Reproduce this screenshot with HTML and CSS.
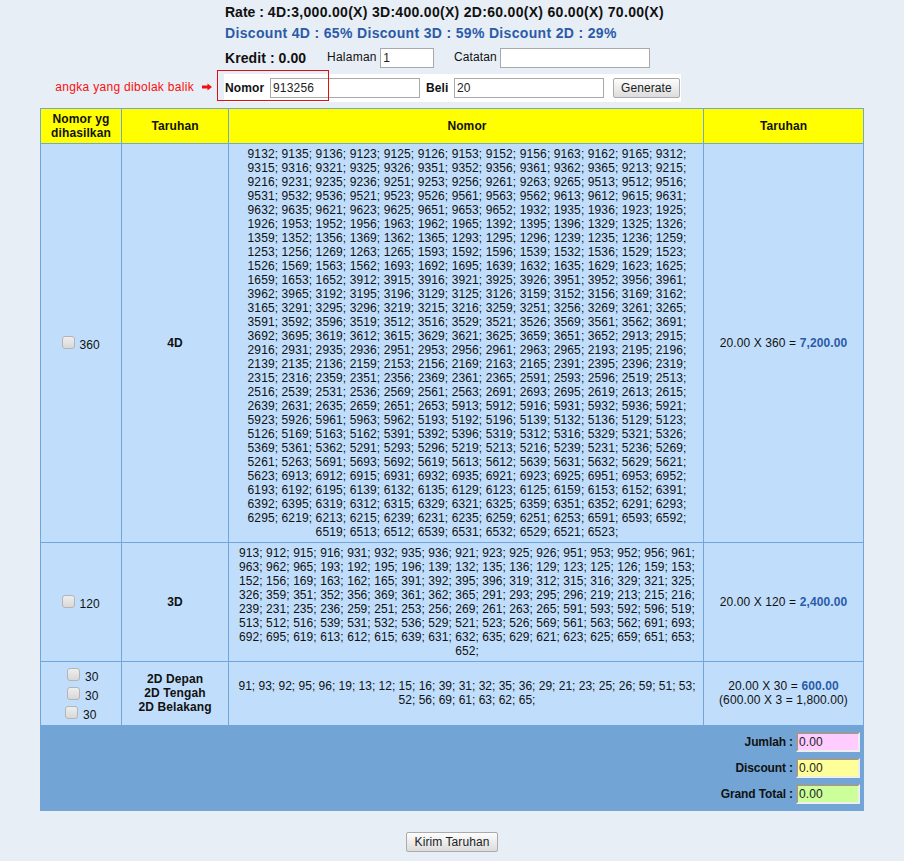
FILE: index.html
```html
<!DOCTYPE html>
<html lang="en">
<head>
    <meta charset="UTF-8">
    <meta name="viewport" content="width=device-width, initial-scale=1.0">
    <title>Generate Nomor</title>
    <link rel="stylesheet" href="styles.css">
</head>
<body>

    <!-- Rate and discount info -->
    <div class="info">
        <div class="rate"><span class="rate-label">Rate : </span>4D:3,000.00(X) 3D:400.00(X) 2D:60.00(X) 60.00(X) 70.00(X)</div>
        <div class="discount">Discount 4D : 65% Discount 3D : 59% Discount 2D : 29%</div>
        <div class="kredit-row">
            <span class="kredit">Kredit : 0.00</span>
            <label class="halaman">Halaman <input type="text" class="field field-small" value="1"></label>
            <label class="catatan">Catatan <input type="text" class="field"></label>
        </div>
    </div>

    <!-- Number entry -->
    <div class="entry-row">
        <div class="note">
            <span>angka yang dibolak balik</span>
            <svg class="note-arrow" width="10" height="8" viewBox="0 0 10 8"><path d="M0 2.5H5.5V0.5L10 4L5.5 7.5V5.5H0Z" fill="#f01010"/></svg>
        </div>
        <form class="entry">
            <label class="entry-label">Nomor</label>
            <input type="text" class="field" value="913256">
            <label class="entry-label beli">Beli</label>
            <input type="text" class="field" value="20">
            <button type="button" class="btn generate">Generate</button>
            <div class="highlight"></div>
        </form>
    </div>

    <!-- Result table -->
    <table class="result">
        <colgroup>
            <col class="col-count">
            <col class="col-type">
            <col class="col-numbers">
            <col class="col-bet">
        </colgroup>
        <tr>
            <th>Nomor yg dihasilkan</th>
            <th>Taruhan</th>
            <th class="list">Nomor</th>
            <th>Taruhan</th>
        </tr>
        <tr>
            <td><input type="checkbox" class="chk"> 360</td>
            <td class="type">4D</td>
            <td class="list">9132; 9135; 9136; 9123; 9125; 9126; 9153; 9152; 9156; 9163; 9162; 9165; 9312; 9315; 9316; 9321; 9325; 9326; 9351; 9352; 9356; 9361; 9362; 9365; 9213; 9215; 9216; 9231; 9235; 9236; 9251; 9253; 9256; 9261; 9263; 9265; 9513; 9512; 9516; 9531; 9532; 9536; 9521; 9523; 9526; 9561; 9563; 9562; 9613; 9612; 9615; 9631; 9632; 9635; 9621; 9623; 9625; 9651; 9653; 9652; 1932; 1935; 1936; 1923; 1925; 1926; 1953; 1952; 1956; 1963; 1962; 1965; 1392; 1395; 1396; 1329; 1325; 1326; 1359; 1352; 1356; 1369; 1362; 1365; 1293; 1295; 1296; 1239; 1235; 1236; 1259; 1253; 1256; 1269; 1263; 1265; 1593; 1592; 1596; 1539; 1532; 1536; 1529; 1523; 1526; 1569; 1563; 1562; 1693; 1692; 1695; 1639; 1632; 1635; 1629; 1623; 1625; 1659; 1653; 1652; 3912; 3915; 3916; 3921; 3925; 3926; 3951; 3952; 3956; 3961; 3962; 3965; 3192; 3195; 3196; 3129; 3125; 3126; 3159; 3152; 3156; 3169; 3162; 3165; 3291; 3295; 3296; 3219; 3215; 3216; 3259; 3251; 3256; 3269; 3261; 3265; 3591; 3592; 3596; 3519; 3512; 3516; 3529; 3521; 3526; 3569; 3561; 3562; 3691; 3692; 3695; 3619; 3612; 3615; 3629; 3621; 3625; 3659; 3651; 3652; 2913; 2915; 2916; 2931; 2935; 2936; 2951; 2953; 2956; 2961; 2963; 2965; 2193; 2195; 2196; 2139; 2135; 2136; 2159; 2153; 2156; 2169; 2163; 2165; 2391; 2395; 2396; 2319; 2315; 2316; 2359; 2351; 2356; 2369; 2361; 2365; 2591; 2593; 2596; 2519; 2513; 2516; 2539; 2531; 2536; 2569; 2561; 2563; 2691; 2693; 2695; 2619; 2613; 2615; 2639; 2631; 2635; 2659; 2651; 2653; 5913; 5912; 5916; 5931; 5932; 5936; 5921; 5923; 5926; 5961; 5963; 5962; 5193; 5192; 5196; 5139; 5132; 5136; 5129; 5123; 5126; 5169; 5163; 5162; 5391; 5392; 5396; 5319; 5312; 5316; 5329; 5321; 5326; 5369; 5361; 5362; 5291; 5293; 5296; 5219; 5213; 5216; 5239; 5231; 5236; 5269; 5261; 5263; 5691; 5693; 5692; 5619; 5613; 5612; 5639; 5631; 5632; 5629; 5621; 5623; 6913; 6912; 6915; 6931; 6932; 6935; 6921; 6923; 6925; 6951; 6953; 6952; 6193; 6192; 6195; 6139; 6132; 6135; 6129; 6123; 6125; 6159; 6153; 6152; 6391; 6392; 6395; 6319; 6312; 6315; 6329; 6321; 6325; 6359; 6351; 6352; 6291; 6293; 6295; 6219; 6213; 6215; 6239; 6231; 6235; 6259; 6251; 6253; 6591; 6593; 6592; 6519; 6513; 6512; 6539; 6531; 6532; 6529; 6521; 6523;</td>
            <td>20.00 X 360 = <span class="amount">7,200.00</span></td>
        </tr>
        <tr>
            <td><input type="checkbox" class="chk"> 120</td>
            <td class="type">3D</td>
            <td class="list list-3d">913; 912; 915; 916; 931; 932; 935; 936; 921; 923; 925; 926; 951; 953; 952; 956; 961; 963; 962; 965; 193; 192; 195; 196; 139; 132; 135; 136; 129; 123; 125; 126; 159; 153; 152; 156; 169; 163; 162; 165; 391; 392; 395; 396; 319; 312; 315; 316; 329; 321; 325; 326; 359; 351; 352; 356; 369; 361; 362; 365; 291; 293; 295; 296; 219; 213; 215; 216; 239; 231; 235; 236; 259; 251; 253; 256; 269; 261; 263; 265; 591; 593; 592; 596; 519; 513; 512; 516; 539; 531; 532; 536; 529; 521; 523; 526; 569; 561; 563; 562; 691; 693; 692; 695; 619; 613; 612; 615; 639; 631; 632; 635; 629; 621; 623; 625; 659; 651; 653; 652;</td>
            <td>20.00 X 120 = <span class="amount">2,400.00</span></td>
        </tr>
        <tr class="row-2d">
            <td class="chk-cell">
                <div class="chk-row shifted"><input type="checkbox" class="chk"> 30</div>
                <div class="chk-row shifted"><input type="checkbox" class="chk"> 30</div>
                <div class="chk-row"><input type="checkbox" class="chk"> 30</div>
            </td>
            <td class="type">2D Depan<br>2D Tengah<br>2D Belakang</td>
            <td class="list list-2d">91; 93; 92; 95; 96; 19; 13; 12; 15; 16; 39; 31; 32; 35; 36; 29; 21; 23; 25; 26; 59; 51; 53; 52; 56; 69; 61; 63; 62; 65;</td>
            <td>20.00 X 30 = <span class="amount">600.00</span><br>(600.00 X 3 = 1,800.00)</td>
        </tr>
        <tr>
            <td colspan="4" class="totals">
                <div class="total-row"><label>Jumlah :</label><input type="text" class="total-input pink" value="0.00"></div>
                <div class="total-row"><label>Discount :</label><input type="text" class="total-input yellow" value="0.00"></div>
                <div class="total-row"><label>Grand Total :</label><input type="text" class="total-input green" value="0.00"></div>
            </td>
        </tr>
    </table>

    <div class="submit-row">
        <button type="button" class="btn kirim">Kirim Taruhan</button>
    </div>

</body>
</html>
```

FILE: styles.css
```css
/* General Styles */
body {
    font-family: "Liberation Sans", Arial, sans-serif;
    font-size: 12px;
    letter-spacing: 0.11px;
    background-color: #e8eef5;
    margin: 0;
    padding: 0;
    color: #111;
}

/* Info block */
.info {
    padding-left: 225px;
}

.rate {
    font-size: 14px;
    font-weight: bold;
    letter-spacing: 0.3px;
    line-height: 16px;
    padding-top: 4px;
}

.rate-label {
    letter-spacing: 0;
}

.discount {
    font-size: 14px;
    font-weight: bold;
    letter-spacing: 0.33px;
    line-height: 16px;
    padding-top: 5px;
    color: #2b5ba8;
}

.kredit-row {
    display: flex;
    align-items: center;
    height: 20px;
    margin-top: 7px;
}

.kredit {
    font-size: 14px;
    font-weight: bold;
    letter-spacing: 0.08px;
    width: 102px;
}

.halaman {
    letter-spacing: 0.25px;
    width: 127px;
}

/* Inputs and buttons */
.field {
    box-sizing: border-box;
    width: 150px;
    height: 20px;
    padding: 1px 2px;
    border: 1px solid #a9a9a9;
    background-color: #fff;
    font-family: "Liberation Sans", Arial, sans-serif;
    font-size: 12px;
    letter-spacing: 0.2px;
    color: #222;
    vertical-align: middle;
}

.field-small {
    width: 54px;
}

.btn {
    height: 20px;
    padding: 0 7px;
    border: 1px solid #aaa;
    border-radius: 2px;
    background: linear-gradient(#fdfdfd, #dcdcdc);
    font-family: "Liberation Sans", Arial, sans-serif;
    font-size: 12px;
    letter-spacing: 0.08px;
    color: #222;
}

.kirim {
    padding: 0 8px;
}

/* Entry row */
.entry-row {
    display: flex;
    margin-top: 6px;
}

.note {
    width: 224px;
    height: 28px;
    display: flex;
    align-items: center;
    justify-content: flex-end;
    padding: 0 12px 2px 0;
    box-sizing: border-box;
    gap: 8px;
    letter-spacing: 0.3px;
    color: #f81010;
}

.note-arrow {
    flex: none;
}

.entry {
    position: relative;
    display: flex;
    align-items: center;
    width: 457px;
    height: 28px;
    background-color: #fff;
}

.entry-label {
    font-weight: bold;
    margin-left: 1px;
    width: 45px;
}

.beli {
    margin-left: 6px;
    width: 28px;
}

.generate {
    margin-left: 9px;
}

/* Red box around the Nomor field */
.highlight {
    position: absolute;
    left: -7px;
    top: -4px;
    width: 110px;
    height: 29px;
    border: 1px solid #e01010;
}

/* Result table */
.result {
    width: 824px;
    margin: 6px auto 0;
    border-collapse: collapse;
    table-layout: fixed;
}

.col-count {
    width: 81px;
}

.col-type {
    width: 107px;
}

.col-numbers {
    width: 475px;
}

.result th,
.result td {
    border: 1px solid #72a5d8;
    padding: 3px;
    text-align: center;
    background-color: #c0defb;
}

.result th {
    background-color: #ffff00;
}

.result .type {
    font-weight: bold;
}

.result .list {
    padding-left: 5px;
}

.list-3d {
    letter-spacing: 0.064px;
}

.list-2d {
    letter-spacing: 0;
}

.result .row-2d td {
    padding-top: 2px;
    padding-bottom: 4px;
}

.result .row-2d .chk-cell {
    padding-top: 5px;
    padding-bottom: 1px;
}

.amount {
    font-weight: bold;
    color: #2b5ba8;
}

/* Checkboxes */
.chk {
    appearance: none;
    box-sizing: border-box;
    width: 13px;
    height: 13px;
    margin: 1px 1px 0 0;
    border: 1px solid #b4b4b4;
    border-radius: 3px;
    background: linear-gradient(#eeeeee, #d8d8d8);
}

.chk-row {
    height: 19px;
    line-height: 19px;
}

.chk-row.shifted {
    padding-left: 4px;
}

/* Totals */
.result .totals {
    background-color: #72a5d6;
    padding: 6px 3px 6px 0;
}

.total-row {
    display: flex;
    justify-content: flex-end;
    align-items: center;
    height: 20px;
    margin-bottom: 6px;
    font-weight: bold;
    letter-spacing: -0.12px;
}

.total-row:last-child {
    margin-bottom: 0;
}

.total-input {
    box-sizing: border-box;
    width: 64px;
    height: 20px;
    margin-left: 3px;
    padding: 1px 1px;
    border: 2px inset #eee;
    font-family: "Liberation Sans", Arial, sans-serif;
    font-size: 12px;
    letter-spacing: 0.08px;
    color: #222;
}

.pink {
    background-color: #ffccff;
}

.yellow {
    background-color: #ffff99;
}

.green {
    background-color: #ccff99;
}

.submit-row {
    margin-top: 21px;
    text-align: center;
}
```
